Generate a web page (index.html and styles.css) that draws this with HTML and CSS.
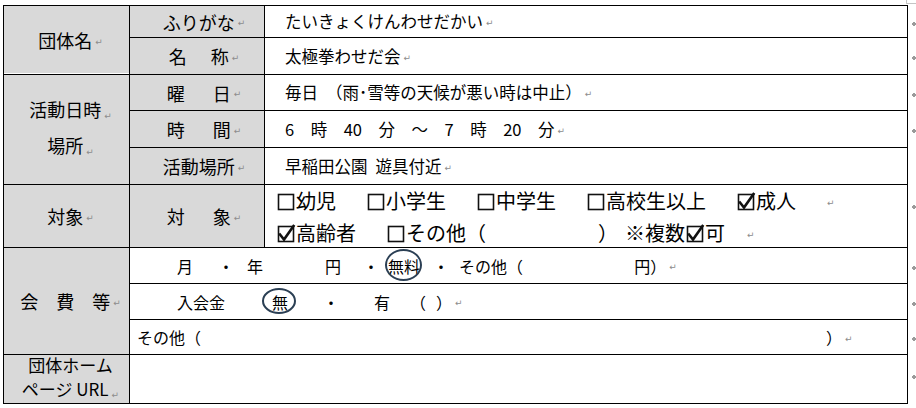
FILE: index.html
```html
<!DOCTYPE html>
<html lang="ja">
<head>
<meta charset="utf-8">
<title>団体情報</title>
<link rel="stylesheet" href="styles.css">
</head>
<body>
<div class="page">
  <div class="sheet">
    <div class="c h1 group1">団体名<span class="pm">↵</span></div>
    <div class="c h2">ふりがな<span class="pm">↵</span></div>
    <div class="c v">たいきょくけんわせだかい<span class="pm">↵</span></div>
    <div class="c h2">名<span class="g24"></span>称<span class="pm">↵</span></div>
    <div class="c v">太極拳わせだ会<span class="pm">↵</span></div>

    <div class="c h1 group3 stack"><div>活動日時<span class="pm">↵</span></div><div>場所<span class="pm">↵</span></div></div>
    <div class="c h2">曜<span class="g28"></span>日<span class="pm">↵</span></div>
    <div class="c v">毎日<span class="g8"></span>（雨･雪等の天候が悪い時は中止）<span class="pm">↵</span></div>
    <div class="c h2">時<span class="g28"></span>間<span class="pm">↵</span></div>
    <div class="c v">6　時　40　分　～　7　時　20　分<span class="pm">↵</span></div>
    <div class="c h2">活動場所<span class="pm">↵</span></div>
    <div class="c v">早稲田公園<span class="g8"></span>遊具付近<span class="pm">↵</span></div>

    <div class="c h1">対象<span class="pm">↵</span></div>
    <div class="c h2">対<span class="g28"></span>象<span class="pm">↵</span></div>
    <div class="c checks">
      <div class="line">
        <span class="ck"><svg class="box" viewBox="0 0 20 20"><rect x="2.5" y="3.5" width="15" height="15"/></svg>幼児</span>
        <span class="ck"><svg class="box" viewBox="0 0 20 20"><rect x="2.5" y="3.5" width="15" height="15"/></svg>小学生</span>
        <span class="ck"><svg class="box" viewBox="0 0 20 20"><rect x="2.5" y="3.5" width="15" height="15"/></svg>中学生</span>
        <span class="ck"><svg class="box" viewBox="0 0 20 20"><rect x="2.5" y="3.5" width="15" height="15"/></svg>高校生以上</span>
        <span class="ck"><svg class="box" viewBox="0 0 20 20"><rect x="2.5" y="3.5" width="15" height="15"/><path d="M4 11.5 L8 16.5 L17.5 3"/></svg>成人</span>
        <span class="pm pm-l1">↵</span>
      </div>
      <div class="line">
        <span class="ck"><svg class="box" viewBox="0 0 20 20"><rect x="2.5" y="3.5" width="15" height="15"/><path d="M4 11.5 L8 16.5 L17.5 3"/></svg>高齢者</span>
        <span class="ck"><svg class="box" viewBox="0 0 20 20"><rect x="2.5" y="3.5" width="15" height="15"/></svg>その他（</span>
        <span class="g82"></span>
        <span>）</span><span class="g7"></span><span>※複数</span><svg class="box" viewBox="0 0 20 20"><rect x="2.5" y="3.5" width="15" height="15"/><path d="M4 11.5 L8 16.5 L17.5 3"/></svg><span>可</span>
        <span class="pm pm-l2">↵</span>
      </div>
    </div>

    <div class="c h1 group7">会　費　等<span class="pm">↵</span></div>
    <div class="c fee wide row7">月<span class="g25"></span>・<span class="g13"></span>年<span class="g62"></span>円<span class="g22"></span>・<span class="g9"></span><span class="circ circ-a">無料</span><span class="g13"></span>・<span class="g10"></span>その他（<span class="g111"></span>円）<span class="pm">↵</span></div>
    <div class="c fee wide row8">入会金<span class="g47"></span><span class="circ circ-b">無</span><span class="g35"></span>・<span class="g35"></span>有<span class="g20"></span>（<span class="g10"></span>）<span class="pm">↵</span></div>
    <div class="c fee wide row9">その他（<span class="g625"></span>）<span class="pm">↵</span></div>

    <div class="c h1 url stack"><div>団体ホーム</div><div>ページ URL<span class="pm">↵</span></div></div>
    <div class="c wide"></div>
  </div>
  <div class="marks">
    <div class="m"><span class="rm"></span></div>
    <div class="m"><span class="rm"></span></div>
    <div class="m"><span class="rm"></span></div>
    <div class="m"><span class="rm"></span></div>
    <div class="m"></div>
    <div class="m top6"><span class="rm"></span></div>
    <div class="m"><span class="rm"></span></div>
    <div class="m"><span class="rm"></span></div>
    <div class="m"><span class="rm"></span></div>
    <div class="m top10"><span class="rm"></span></div>
  </div>
  <div class="corner"></div>
</div>
</body>
</html>
```

FILE: styles.css
```css
html, body {
  margin: 0;
  padding: 0;
  background: #fff;
}
body {
  font-family: "Noto Sans CJK JP", "Noto Sans", sans-serif;
  color: #000;
}
.page {
  position: relative;
  display: flex;
  align-items: flex-start;
  padding: 5px 0 0 3px;
  width: 913px;
  height: 403px;
}
.sheet {
  display: grid;
  grid-template-columns: 125px 134px 642px;
  grid-template-rows: 31px 36px 35px 36px 36px 62px 35px 35px 34px 48px;
  gap: 1px;
  background: #000;
  border: 1px solid #000;
}
.c {
  background: #fff;
  display: flex;
  align-items: center;
  white-space: nowrap;
  line-height: 1;
  overflow: visible;
}
.h1, .h2 {
  background: #d9d9d9;
  justify-content: center;
  font-size: 18px;
}
.h1 { padding-left: 8px; }
.h2 { padding-left: 14px; }
.group1 {
  grid-row: span 2;
  box-shadow: inset 0 -1px 0 #fff;
}
.group3 { grid-row: span 3; }
.group7 { grid-row: span 3; }
.stack {
  flex-direction: column;
  line-height: 31px;
}
.url {
  font-size: 17px;
  line-height: 24px;
}
.wide { grid-column: span 2; }
.v {
  font-size: 16.5px;
  padding-left: 20px;
}
.fee {
  font-size: 16px;
}
.row7, .row8 { padding-left: 47px; }
.row9 { padding-left: 7px; }

.pm {
  font-family: "DejaVu Sans", sans-serif;
  font-size: 9px;
  color: #8c8c8c;
  margin-left: 3px;
  position: relative;
  top: 2px;
}

.checks {
  flex-direction: column;
  align-items: flex-start;
  justify-content: flex-start;
  padding-left: 11px;
  font-size: 20px;
  font-weight: 400;
  line-height: 32px;
}
.checks .line {
  display: flex;
  align-items: center;
  height: 32px;
}
.ck {
  display: inline-flex;
  align-items: center;
  margin-right: 30px;
}
.box {
  width: 20px;
  height: 20px;
  flex: none;
}
.box rect {
  fill: none;
  stroke: #111;
  stroke-width: 1.6;
}
.box path {
  fill: none;
  stroke: #111;
  stroke-width: 2.6;
  stroke-linecap: square;
  stroke-linejoin: miter;
}
.checks .pm { font-weight: normal; }
.pm-l1 { margin-left: 1px; }
.pm-l2 { margin-left: 22px; }

/* spacers */
.g7, .g8, .g9, .g10, .g13, .g20, .g22, .g24, .g25, .g28, .g35, .g47, .g62, .g82, .g111, .g625 {
  display: inline-block;
  flex: none;
}
.g7 { width: 7px; }
.g8 { width: 8px; }
.g9 { width: 9px; }
.g10 { width: 10px; }
.g13 { width: 13px; }
.g20 { width: 20px; }
.g22 { width: 22px; }
.g24 { width: 24px; }
.g25 { width: 25px; }
.g28 { width: 28px; }
.g35 { width: 35px; }
.g47 { width: 47px; }
.g62 { width: 62px; }
.g82 { width: 82px; }
.g111 { width: 111px; }
.g625 { width: 625px; }

.circ {
  position: relative;
  display: inline-block;
}
.circ::after {
  content: "";
  position: absolute;
  top: 50%;
  box-sizing: border-box;
  border: 2px solid #2b3f54;
  border-radius: 50%;
}
.circ-a::after {
  left: -3px;
  width: 37px;
  height: 32px;
  margin-top: -17px;
}
.circ-b::after {
  left: -10px;
  width: 34px;
  height: 26px;
  margin-top: -14px;
}

.marks {
  display: grid;
  grid-template-rows: 31px 36px 35px 36px 36px 62px 35px 35px 34px 48px;
  row-gap: 1px;
  padding-top: 1px;
  margin-left: 4px;
  width: 6px;
}
.m {
  display: flex;
  align-items: center;
}
.top6 { align-items: flex-start; padding-top: 16px; }
.top10 { align-items: flex-start; padding-top: 16px; }
.rm {
  position: relative;
  display: block;
  width: 4px;
  height: 4px;
  margin-top: 4px;
}
.rm::before, .rm::after {
  content: "";
  position: absolute;
  background: #9a9a9a;
}
.rm::before { left: 1px; top: 0; width: 2px; height: 4px; }
.rm::after { left: 0; top: 1px; width: 4px; height: 2px; }

.corner {
  position: absolute;
  top: 0;
  left: 906px;
  width: 10px;
  height: 3px;
  border-left: 1px solid #c4c4c4;
  border-bottom: 1px solid #c4c4c4;
}
```
